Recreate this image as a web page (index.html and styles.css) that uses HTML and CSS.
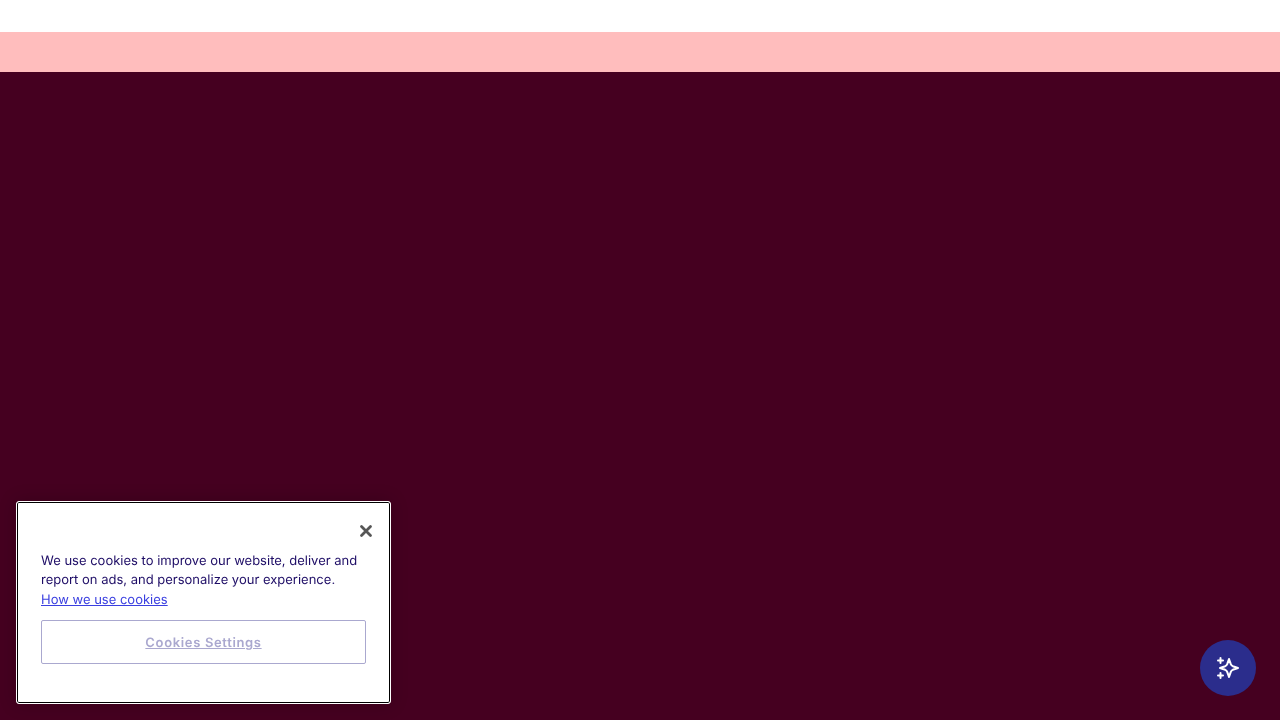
FILE: index.html
```html
<!DOCTYPE html>
<html lang="en">
<head>
<meta charset="utf-8">
<meta name="viewport" content="width=device-width, initial-scale=1">
<title>Home</title>
<link rel="stylesheet" href="styles.css">
</head>
<body class="page">
<header class="topbar"></header>
<div class="banner"></div>
<main class="hero"></main>

<section class="cookie" role="dialog" aria-label="Cookie notice">
  <button class="cookie-close" type="button" aria-label="Close">
    <svg class="cookie-close-icon" viewBox="0 0 12 12" aria-hidden="true"><path d="M1.5 1.5 10.5 10.5M10.5 1.5 1.5 10.5"/></svg>
  </button>
  <p class="cookie-text">We use cookies to improve our website, deliver and report on ads, and personalize your experience. <a class="cookie-link" href="#cookies">How we use cookies</a></p>
  <button class="cookie-settings" type="button">Cookies Settings</button>
</section>

<button class="assistant" type="button" aria-label="Open assistant">
  <svg class="assistant-icon" viewBox="0 0 24 24" aria-hidden="true"><path d="M13 3L14.8 8.2Q15.4 9.6 16.8 10.2L22 12L16.8 13.8Q15.4 14.4 14.8 15.8L13 21L11.2 15.8Q10.6 14.4 9.2 13.8L4 12L9.2 10.2Q10.6 9.6 11.2 8.2ZM4.5 2V7M2 4.5H7M4.5 17V22M2 19.5H7"/></svg>
</button>
</body>
</html>
```

FILE: styles.css
```css
* { box-sizing: border-box; }
.page {
  margin: 0;
  min-height: 100vh;
  display: flex;
  flex-direction: column;
  background: #fff;
  font-family: Inter, "Liberation Sans", sans-serif;
  text-rendering: geometricPrecision;
}
.topbar { height: 32px; background: #fff; }
.banner { height: 40px; background: #ffbdbd; }
.hero { flex: 1; background: #450020; }

.cookie {
  position: fixed;
  left: 16px;
  bottom: 16px;
  width: 375px;
  max-width: calc(100% - 32px);
  display: flex;
  flex-direction: column;
  padding: 16px 24px 39px;
  border: 1px solid #fff;
  border-radius: 3px;
  background: #fff;
  box-shadow: inset 0 0 0 1px #000, 0 0 18px rgba(0, 0, 0, 0.2);
}
.cookie-close {
  align-self: flex-end;
  display: flex;
  margin-right: -8px;
  padding: 7px 2px;
  border: 0;
  background: none;
  cursor: pointer;
}
.cookie-close-icon {
  width: 12px;
  height: 12px;
  overflow: visible;
  fill: none;
  stroke: #565656;
  stroke-width: 2.8;
  stroke-linecap: round;
}
.cookie-text {
  margin: 8px 0 10px;
  font-size: 13px;
  font-optical-sizing: none;
  line-height: 1.5;
  color: #1e0d66;
}
.cookie-link { display: block; color: #3a3fe0; }
.cookie-settings {
  height: 44px;
  padding: 2px 6px 0;
  border: 1px solid #aaa8cf;
  border-radius: 2px;
  background: transparent;
  color: #aaa8cf;
  font: 600 13px/16px Inter, "Liberation Sans", sans-serif;
  letter-spacing: 0.05em;
  text-decoration: underline;
  text-rendering: inherit;
  cursor: pointer;
}

.assistant {
  position: fixed;
  right: 24px;
  bottom: 24px;
  width: 56px;
  height: 56px;
  display: grid;
  place-items: center;
  padding: 0;
  border: 0;
  border-radius: 50%;
  background: #2b2d8c;
  cursor: pointer;
}
.assistant-icon {
  width: 24px;
  height: 24px;
  fill: none;
  stroke: #fff;
  stroke-width: 2;
  stroke-linecap: round;
  stroke-linejoin: round;
}
```
